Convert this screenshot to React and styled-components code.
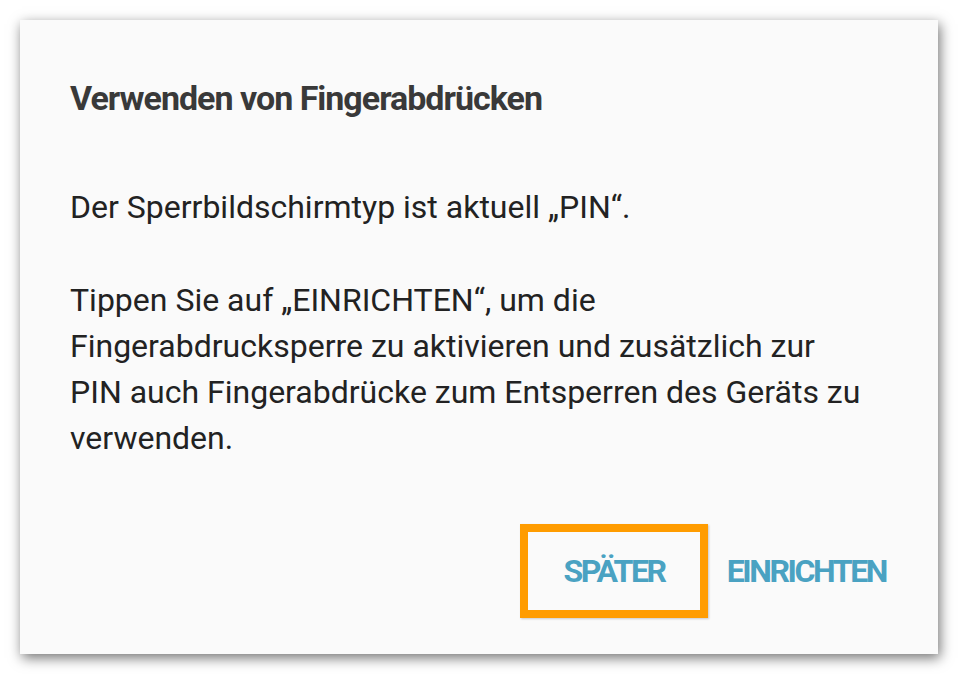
import React from 'react';
import styled, { createGlobalStyle } from 'styled-components';

const Global = createGlobalStyle`
  html, body {
    margin: 0;
    background: #ffffff;
  }
  body {
    font-family: Roboto, "Noto Sans", sans-serif;
  }
`;

const Page = styled.div`
  width: 958px;
  height: 674px;
  padding: 20px;
  box-sizing: border-box;
`;

const Dialog = styled.div`
  width: 918px;
  height: 634px;
  box-sizing: border-box;
  background: #fafafa;
  box-shadow: 2px 4px 12px rgba(0, 0, 0, 0.55);
  padding: 58px 50px 0 50px;
  display: flex;
  flex-direction: column;
`;

const Title = styled.h1`
  margin: 0;
  font-size: 34px;
  font-weight: 700;
  color: #393939;
  letter-spacing: -1px;
  line-height: 40px;
`;

const Body = styled.div`
  margin-top: 66px;
  color: #222;
  font-size: 32px;
  line-height: 46px;
`;

const Para = styled.p`
  margin: 0 0 47px 0;
  &:last-child {
    margin-bottom: 0;
  }
`;

const Actions = styled.div`
  margin-top: auto;
  margin-bottom: 36px;
  margin-right: -6px;
  display: flex;
  justify-content: flex-end;
  align-items: center;
  gap: 11px;
`;

const Button = styled.button`
  background: none;
  border: 8px solid ${p => (p.focused ? '#ff9c00' : 'transparent')};
  box-shadow: ${p => (p.focused ? '1px 1px 2px rgba(0,0,0,0.2)' : 'none')};
  height: 94px;
  padding: 0 ${p => (p.focused ? '35px' : '0')};
  color: #4aa2c2;
  font-family: Roboto, sans-serif;
  font-size: 32px;
  font-weight: 700;
  letter-spacing: -2.4px;
  cursor: pointer;
`;

export default function App() {
  return (
    <>
      <Global />
      <Page>
        <Dialog>
          <Title>Verwenden von Fingerabdrücken</Title>
          <Body>
            <Para>Der Sperrbildschirmtyp ist aktuell „PIN“.</Para>
            <Para>
              Tippen Sie auf „EINRICHTEN“, um die
              <br />
              Fingerabdrucksperre zu aktivieren und zusätzlich zur
              <br />
              PIN auch Fingerabdrücke zum Entsperren des Geräts zu
              <br />
              verwenden.
            </Para>
          </Body>
          <Actions>
            <Button focused>SPÄTER</Button>
            <Button>EINRICHTEN</Button>
          </Actions>
        </Dialog>
      </Page>
    </>
  );
}
